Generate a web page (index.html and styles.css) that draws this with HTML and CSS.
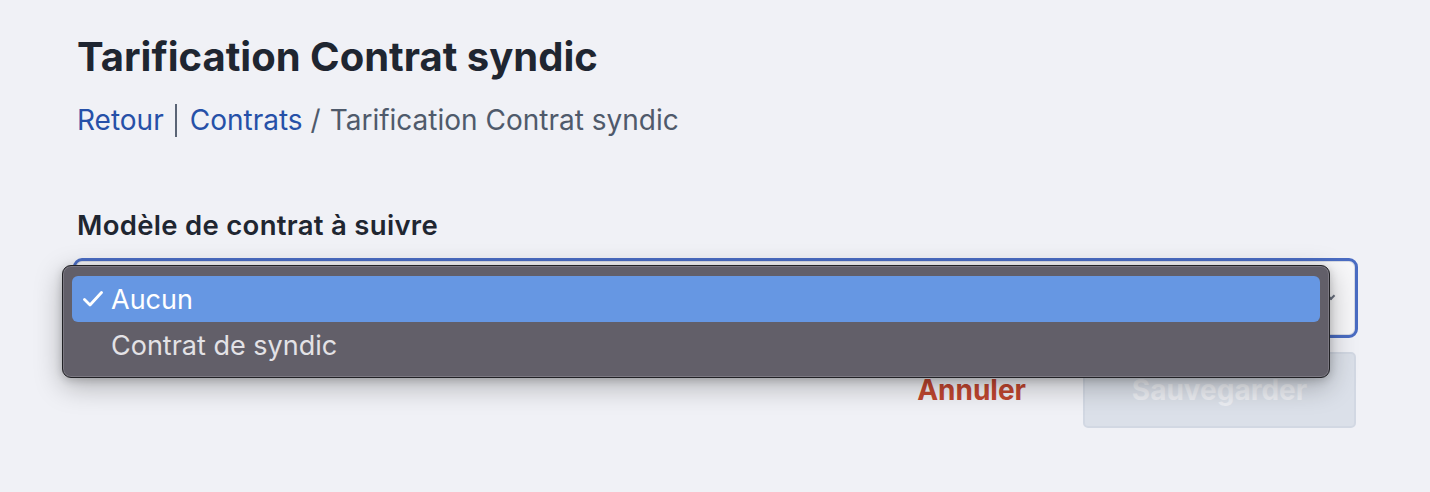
FILE: index.html
```html
<!DOCTYPE html>
<html lang="fr">
<head>
<meta charset="utf-8">
<link rel="stylesheet" href="styles.css">
</head>
<body>
<main class="page">
  <h1 class="title">Tarification Contrat syndic</h1>
  <nav class="crumbs">
    <a class="link" href="#">Retour</a>
    <span class="bar"></span>
    <a class="link" href="#">Contrats</a>
    <span class="slash">/</span>
    <span class="current">Tarification Contrat syndic</span>
  </nav>
  <form class="form">
    <label class="label">Modèle de contrat à suivre</label>
    <div class="select-wrap">
      <div class="select">
        <span class="chev"></span>
      </div>
      <ul class="menu">
        <li class="opt opt-active"><span class="check"><svg width="20" height="16" viewBox="0 0 20 16"><polyline points="1.5,8.5 7,14 18.5,1.5" fill="none" stroke="#ffffff" stroke-width="2.8" stroke-linecap="round" stroke-linejoin="round"/></svg></span>Aucun</li>
        <li class="opt"><span class="check"></span>Contrat de syndic</li>
      </ul>
    </div>
    <div class="actions">
      <button type="button" class="cancel">Annuler</button>
      <button type="button" class="save" disabled>Sauvegarder</button>
    </div>
  </form>
</main>
</body>
</html>
```

FILE: styles.css
```css
* { box-sizing: border-box; }
html, body { margin: 0; padding: 0; }
body {
  background: #f0f1f6;
  font-family: Inter, "Noto Sans", "Liberation Sans", sans-serif;
  width: 1430px;
  height: 492px;
  overflow: hidden;
}
.page {
  padding: 33px 72px 0 77px;
}
.title {
  margin: 0;
  font-size: 40px;
  font-weight: 700;
  line-height: 48px;
  color: #1f2631;
}
.crumbs {
  margin-top: 22px;
  display: flex;
  align-items: center;
  font-size: 28px;
  line-height: 34px;
  color: #4f5a6b;
}
.link { color: #2650a8; text-decoration: none; }
.bar {
  display: inline-block;
  width: 2px;
  height: 33px;
  background: #5a6475;
  margin: 0 13px 0 11px;
}
.slash { margin: 0 9px 0 8px; color: #4f5a6b; }
.form { margin-top: 71px; }
.label {
  display: block;
  font-size: 27.5px;
  font-weight: 600;
  color: #1f2631;
  line-height: 34px;
  letter-spacing: 0.3px;
}
.select-wrap {
  position: relative;
  margin-top: 16px;
  margin-left: -4px;
}
.select {
  height: 80px;
  border: 3px solid #4a6cc2;
  border-radius: 9px;
  background: #f7f7f9;
  box-shadow: inset 0 0 0 1px #d8dbe3;
  position: relative;
}
.chev {
  position: absolute;
  right: 21px;
  top: 32px;
  width: 6px;
  height: 6px;
  border-right: 2px solid #6b7280;
  border-bottom: 2px solid #6b7280;
  transform: rotate(45deg);
}
.menu {
  position: absolute;
  left: -11px;
  top: 7px;
  width: 1268px;
  margin: 0;
  padding: 10px 9px 9px;
  list-style: none;
  background: #625f69;
  border: 1px solid #222226;
  border-radius: 9px;
  box-shadow: inset 0 0 0 1px #7b7882, 0 8px 28px rgba(0,0,0,0.28), 0 2px 8px rgba(0,0,0,0.18);
}
.opt {
  height: 46px;
  display: flex;
  align-items: center;
  font-size: 27px;
  color: #e3e2e6;
  border-radius: 6px;
  padding-left: 11px;
}
.opt-active {
  background: #6697e3;
  color: #ffffff;
}
.check {
  display: inline-flex;
  align-items: center;
  width: 28px;
  height: 20px;
}
.actions {
  display: flex;
  justify-content: flex-end;
  align-items: center;
  gap: 57px;
  margin-top: 14px;
  margin-right: 2px;
}
.cancel {
  background: none;
  border: none;
  padding: 0;
  font-family: inherit;
  font-size: 28px;
  font-weight: 700;
  color: #bf4630;
}
.save {
  width: 273px;
  height: 76px;
  background: #dbe0e9;
  border: 2px solid #d2d8e3;
  border-radius: 5px;
  font-family: inherit;
  font-size: 28px;
  font-weight: 700;
  color: #eceef3;
}
```
